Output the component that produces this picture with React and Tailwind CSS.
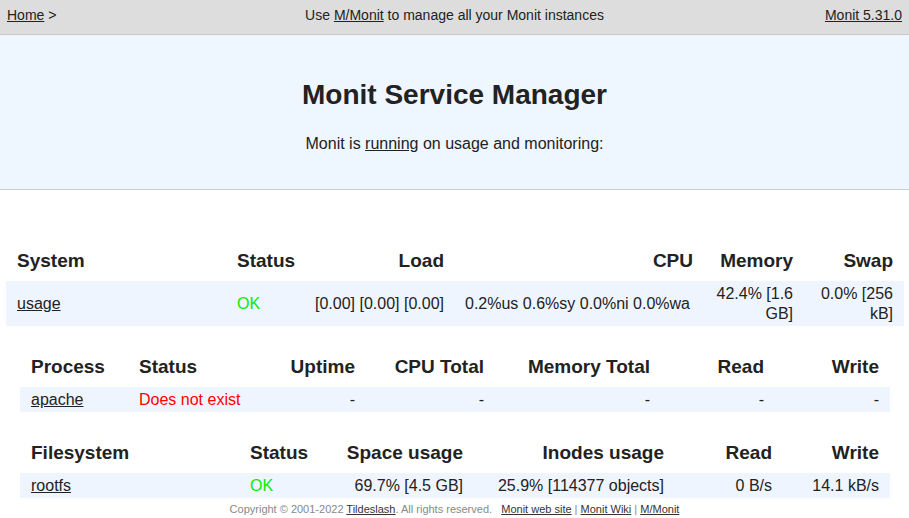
import React from "react";

const F = { fontFamily: '"Liberation Sans", Arial, sans-serif' };

function Th({ children, right, w }) {
  return (
    <th
      className={`px-[11px] pt-[4px] pb-[8px] leading-[24px] text-[19px] font-bold text-[#222] whitespace-nowrap ${right ? "text-right" : "text-left"}`}
      style={{ width: w }}
    >
      {children}
    </th>
  );
}

function Td({ children, right, tall, className = "" }) {
  return (
    <td className={`px-[11px] py-[3px] ${tall ? "leading-[19.5px]" : "leading-[19px]"} text-[16px] align-middle ${right ? "text-right" : "text-left"} ${className}`}>
      {children}
    </td>
  );
}

function A({ children }) {
  return <a href="#" className="underline text-[#222]">{children}</a>;
}

export default function App() {
  return (
    <div className="w-[909px] h-[518px] bg-white text-[#222] overflow-hidden" style={F}>
      <div className="h-[35px] bg-[#dddddd] border-b border-[#c8c8c8] flex items-center px-[7px] text-[14px] pb-[4px]">
        <div className="flex-1"><A>Home</A> &gt;</div>
        <div>Use <A>M/Monit</A> to manage all your Monit instances</div>
        <div className="flex-1 text-right"><A>Monit 5.31.0</A></div>
      </div>
      <div className="h-[155px] bg-[#eef6ff] border-b border-[#cccccc] flex flex-col items-center">
        <h1 className="mt-[42px] text-[28px] leading-[36px] font-bold text-[#222]">Monit Service Manager</h1>
        <p className="mt-[21px] text-[16px] leading-[20px]">
          Monit is <A>running</A> on usage and monitoring:
        </p>
      </div>

      <table className="table-fixed border-collapse w-[898px] ml-[6px] mt-[55px]">
        <thead>
          <tr>
            <Th w={220}>System</Th>
            <Th w={74}>Status</Th>
            <Th w={155} right>Load</Th>
            <Th w={249} right>CPU</Th>
            <Th w={100} right>Memory</Th>
            <Th w={100} right>Swap</Th>
          </tr>
        </thead>
        <tbody>
          <tr className="bg-[#eef5fe]">
            <Td tall><A>usage</A></Td>
            <Td tall className="text-[#00ee00]">OK</Td>
            <Td tall right>[0.00] [0.00] [0.00]</Td>
            <Td tall className="pl-[10px]">0.2%us 0.6%sy 0.0%ni 0.0%wa</Td>
            <Td tall right>42.4% [1.6 GB]</Td>
            <Td tall right>0.0% [256 kB]</Td>
          </tr>
        </tbody>
      </table>

      <table className="table-fixed border-collapse w-[870px] ml-[20px] mt-[25px]">
        <thead>
          <tr>
            <Th w={108}>Process</Th>
            <Th w={122}>Status</Th>
            <Th w={116} right>Uptime</Th>
            <Th w={129} right>CPU Total</Th>
            <Th w={166} right>Memory Total</Th>
            <Th w={114} right>Read</Th>
            <Th w={115} right>Write</Th>
          </tr>
        </thead>
        <tbody>
          <tr className="bg-[#eef5fe]">
            <Td><A>apache</A></Td>
            <Td className="text-[#ff0000] whitespace-nowrap">Does not exist</Td>
            <Td right>-</Td>
            <Td right>-</Td>
            <Td right>-</Td>
            <Td right>-</Td>
            <Td right>-</Td>
          </tr>
        </tbody>
      </table>

      <table className="table-fixed border-collapse w-[870px] ml-[20px] mt-[25px]">
        <thead>
          <tr>
            <Th w={219}>Filesystem</Th>
            <Th w={81}>Status</Th>
            <Th w={154} right>Space usage</Th>
            <Th w={201} right>Inodes usage</Th>
            <Th w={108} right>Read</Th>
            <Th w={107} right>Write</Th>
          </tr>
        </thead>
        <tbody>
          <tr className="bg-[#eef5fe]">
            <Td><A>rootfs</A></Td>
            <Td className="text-[#00ee00]">OK</Td>
            <Td right className="whitespace-nowrap">69.7% [4.5 GB]</Td>
            <Td right className="whitespace-nowrap">25.9% [114377 objects]</Td>
            <Td right>0 B/s</Td>
            <Td right>14.1 kB/s</Td>
          </tr>
        </tbody>
      </table>

      <div className="mt-[4px] text-center text-[11px] leading-[14px] text-[#888]">
        Copyright © 2001-2022 <a href="#" className="underline text-[#333]">Tildeslash</a>. All rights reserved.{"\u00a0\u00a0 "}
        <a href="#" className="underline text-[#333]">Monit web site</a> | <a href="#" className="underline text-[#333]">Monit Wiki</a> | <a href="#" className="underline text-[#333]">M/Monit</a>
      </div>
    </div>
  );
}
